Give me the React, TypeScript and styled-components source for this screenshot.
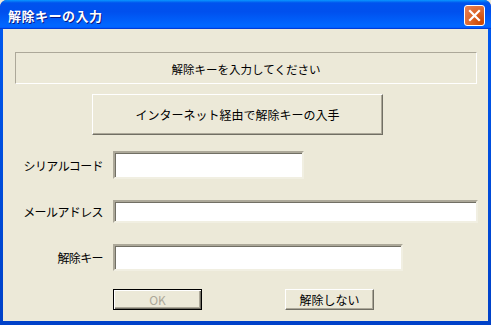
import styled, { createGlobalStyle } from "styled-components";

const GlobalStyle = createGlobalStyle`
  html, body {
    margin: 0;
    padding: 0;
    background: #ece9d8;
  }
  * {
    box-sizing: border-box;
  }
`;

const App = () => {
  return (
    <>
      <GlobalStyle />
      <Window>
        <TitleBar>
          <TitleText>解除キーの入力</TitleText>
          <CloseButton aria-label="閉じる">
            <svg width="13" height="13" viewBox="0 0 13 13">
              <path
                d="M2 2 L11 11 M11 2 L2 11"
                stroke="#fff"
                strokeWidth="2.2"
                strokeLinecap="square"
              />
            </svg>
          </CloseButton>
        </TitleBar>
        <Frame>
          <Client>
            <InfoPanel>解除キーを入力してください</InfoPanel>
            <BigButton>インターネット経由で解除キーの入手</BigButton>
            <Form>
              <Row>
                <Label>シリアルコード</Label>
                <TextBox $width={191} $height={28} />
              </Row>
              <Row>
                <Label>メールアドレス</Label>
                <TextBox $width={365} $height={23} />
              </Row>
              <Row>
                <Label>解除キー</Label>
                <TextBox $width={290} $height={27} />
              </Row>
            </Form>
            <ButtonRow>
              <DialogButton $default disabled>
                OK
              </DialogButton>
              <DialogButton>解除しない</DialogButton>
            </ButtonRow>
          </Client>
        </Frame>
      </Window>
    </>
  );
};

export default App;

const uiFont = `"MS UI Gothic", "Noto Sans CJK JP", "DejaVu Sans", sans-serif`;

const Window = styled.div`
  width: 491px;
  height: 325px;
  display: flex;
  flex-direction: column;
  background: #0831d9;
  border-radius: 7px 7px 0 0;
  overflow: hidden;
  font-family: ${uiFont};
`;

const TitleBar = styled.div`
  height: 29px;
  flex: none;
  display: flex;
  align-items: center;
  justify-content: space-between;
  padding: 0 6px 0 8px;
  background: linear-gradient(
    180deg,
    #0997ff 0%,
    #0053ee 10%,
    #0050ee 40%,
    #0066ff 86%,
    #0066ff 92%,
    #005bff 95%,
    #003dd7 97%,
    #003dd7 100%
  );
`;

const TitleText = styled.span`
  color: #fff;
  font-size: 13px;
  font-weight: 700;
  letter-spacing: 0.5px;
  text-shadow: 1px 1px 0 #0a1883;
  margin-top: 1px;
`;

const CloseButton = styled.div`
  width: 21px;
  height: 21px;
  display: flex;
  align-items: center;
  justify-content: center;
  border: 1px solid #fff;
  border-radius: 3px;
  background: radial-gradient(
    circle at 85% 85%,
    #cc4600 0%,
    #dc6527 45%,
    #e9835a 100%
  );
  margin-top: 1px;
`;

const Frame = styled.div`
  flex: 1;
  display: flex;
  padding: 0 4px 4px 3px;
  background: linear-gradient(180deg, #0058ee, #0041c8);
`;

const Client = styled.div`
  flex: 1;
  display: flex;
  flex-direction: column;
  align-items: flex-start;
  background: #ece9d8;
  padding: 23px 10px 0 12px;
  font-size: 12px;
  color: #000;
`;

const InfoPanel = styled.div`
  width: 462px;
  height: 32px;
  display: flex;
  align-items: center;
  justify-content: center;
  border: 1px solid;
  border-color: #aca899 #fff #fff #aca899;
  font-size: 11.5px;
  padding-top: 1px;
`;

const BigButton = styled.button`
  margin: 10px 0 0 77px;
  width: 291px;
  height: 41px;
  background: #ece9d8;
  font-family: ${uiFont};
  font-size: 12px;
  color: #000;
  border: 1px solid;
  border-color: #fff #716f64 #716f64 #fff;
  box-shadow: inset -1px -1px 0 #aca899;
  padding: 0;
`;

const Form = styled.div`
  display: flex;
  flex-direction: column;
  gap: 21px;
  margin: 16px 0 0 -12px;
`;

const Row = styled.div`
  display: flex;
  align-items: center;
`;

const Label = styled.span`
  width: 110px;
  padding-right: 10px;
  text-align: right;
  font-size: 12px;
  letter-spacing: -0.6px;
`;

const TextBox = styled.input<{ $width: number; $height: number }>`
  width: ${(p) => p.$width}px;
  height: ${(p) => p.$height}px;
  background: #fff;
  border: 2px solid;
  border-color: #aca899 #f1efe2 #f1efe2 #aca899;
  box-shadow: inset 1px 1px 0 #716f64;
  padding: 0 3px;
  font-family: ${uiFont};
  font-size: 12px;
  outline: none;
`;

const ButtonRow = styled.div`
  display: flex;
  gap: 83px;
  margin: 18px 0 0 98px;
`;

const DialogButton = styled.button<{ $default?: boolean }>`
  width: 89px;
  height: 21px;
  padding: 0;
  background: #ece9d8;
  font-family: ${uiFont};
  font-size: 12px;
  color: #000;
  border: 1px solid;
  border-color: ${(p) =>
    p.$default ? "#000" : "#fff #716f64 #716f64 #fff"};
  box-shadow: ${(p) =>
    p.$default
      ? "inset 1px 1px 0 #fff, inset -1px -1px 0 #716f64, inset -2px -2px 0 #aca899"
      : "inset -1px -1px 0 #aca899"};
  &:disabled {
    color: #aca899;
  }
`;
